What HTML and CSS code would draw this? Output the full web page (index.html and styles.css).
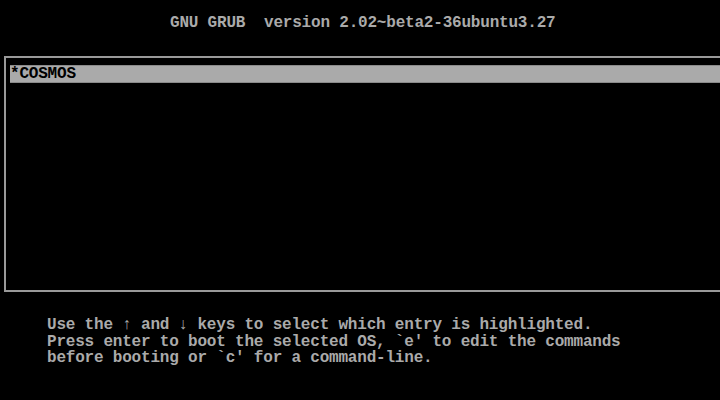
FILE: index.html
```html
<!DOCTYPE html>
<html lang="en">
<head>
  <meta charset="UTF-8">
  <meta name="viewport" content="width=device-width, initial-scale=1.0">
  <title>GNU GRUB</title>
  <link rel="stylesheet" href="styles.css">
</head>
<body>
  <div class="screen">
    <div class="title">GNU GRUB  version 2.02~beta2-36ubuntu3.27</div>

    <div class="menu">
      <div class="entry selected">*COSMOS</div>
    </div>

    <div class="help">
      <div class="line">Use the ↑ and ↓ keys to select which entry is highlighted.</div>
      <div class="line">Press enter to boot the selected OS, `e' to edit the commands</div>
      <div class="line">before booting or `c' for a command-line.</div>
    </div>
  </div>
</body>
</html>
```

FILE: styles.css
```css
body {
  margin: 0;
  background-color: #000;
  height: 100vh;
  overflow: hidden;
}

.screen {
  font-family: "Liberation Mono", "DejaVu Sans Mono", monospace;
  font-size: 16px;
  font-weight: bold;
  letter-spacing: -0.2px;
  color: #aaaaaa;
}

.title,
.entry,
.line {
  white-space: pre;
}

.title {
  padding: 15px 0 0 170px;
  height: 41px;
  line-height: 16px;
}

.menu {
  margin-left: 4px;
  border: 2px solid #999999;
  border-right: none;
  padding: 7px 0 0 4px;
  height: 225px;
}

.entry {
  height: 16px;
  line-height: 17px;
}

.entry.selected {
  background-color: #aaaaaa;
  color: #000;
  border-top: 1px solid #8a8a8a;
  border-bottom: 1px solid #8a8a8a;
}

.help {
  margin-top: 24px;
  padding-left: 47px;
  line-height: 16.5px;
}

.help .line:first-child {
  padding-top: 1px;
}
```
